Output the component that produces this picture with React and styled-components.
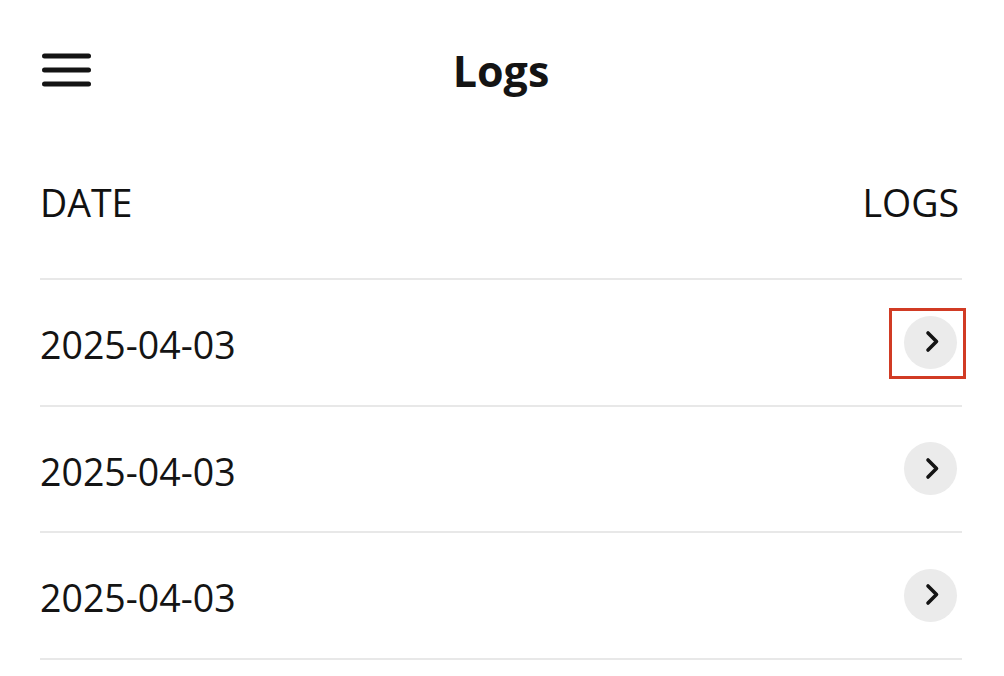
import React from "react";
import styled, { createGlobalStyle } from "styled-components";

const Global = createGlobalStyle`
  html, body { margin: 0; padding: 0; background: #ffffff; }
  body { font-family: "Open Sans", "Noto Sans", sans-serif; color: #141414; }
`;

const Page = styled.div`
  width: 1004px;
  height: 676px;
  overflow: hidden;
  padding: 0 42px 0 40px;
  box-sizing: border-box;
  background: #fff;
`;

const TopBar = styled.header`
  position: relative;
  height: 140px;
  display: flex;
  align-items: center;
  justify-content: center;
`;

const MenuButton = styled.button`
  position: absolute;
  left: 2px;
  top: 50%;
  transform: translateY(-50%);
  width: 49px;
  height: 33px;
  padding: 0;
  border: none;
  background: none;
  display: flex;
  flex-direction: column;
  justify-content: space-between;
  cursor: pointer;
`;

const MenuLine = styled.span`
  display: block;
  height: 5px;
  width: 100%;
  border-radius: 3px;
  background: #141414;
`;

const Title = styled.h1`
  margin: 0;
  font-size: 43px;
  font-weight: 700;
  line-height: 1;
  color: #141414;
`;

const HeaderRow = styled.div`
  display: flex;
  justify-content: space-between;
  align-items: center;
  padding: 40px 3px 52px 0;
  line-height: 46px;
  font-size: 37.5px;
  font-weight: 400;
  color: #111;
  border-bottom: 2px solid #e8e8e8;
`;

const Row = styled.div`
  display: flex;
  justify-content: space-between;
  align-items: center;
  height: 124.5px;
  border-bottom: 2px solid #e8e8e8;
`;

const DateText = styled.span`
  font-size: 37.5px;
  color: #141414;
  line-height: 1;
  padding-top: 5px;
`;

const ChevronWrap = styled.div`
  position: relative;
  margin-right: 5px;
  display: flex;
`;

const ChevronButton = styled.button`
  width: 53px;
  height: 53px;
  border-radius: 50%;
  border: none;
  padding: 0;
  background: #ebebeb;
  display: flex;
  align-items: center;
  justify-content: center;
  cursor: pointer;
`;

const Highlight = styled.div`
  position: absolute;
  left: -15px;
  top: -8px;
  width: 77px;
  height: 71px;
  box-sizing: border-box;
  border: 3px solid #d13b24;
  pointer-events: none;
`;

const Chevron = () => (
  <svg width="26" height="26" viewBox="0 0 26 26" fill="none">
    <path
      d="M10 4 L18.5 12.5 L10 21"
      stroke="#141414"
      strokeWidth="3.6"
      strokeLinecap="round"
      strokeLinejoin="round"
    />
  </svg>
);

const rows = [
  { date: "2025-04-03", highlighted: true },
  { date: "2025-04-03", highlighted: false },
  { date: "2025-04-03", highlighted: false },
];

export default function App() {
  return (
    <Page>
      <Global />
      <TopBar>
        <MenuButton aria-label="menu">
          <MenuLine />
          <MenuLine />
          <MenuLine />
        </MenuButton>
        <Title>Logs</Title>
      </TopBar>
      <HeaderRow>
        <span>DATE</span>
        <span>LOGS</span>
      </HeaderRow>
      {rows.map((r, i) => (
        <Row key={i}>
          <DateText>{r.date}</DateText>
          <ChevronWrap>
            <ChevronButton aria-label="open">
              <Chevron />
            </ChevronButton>
            {r.highlighted && <Highlight />}
          </ChevronWrap>
        </Row>
      ))}
    </Page>
  );
}
